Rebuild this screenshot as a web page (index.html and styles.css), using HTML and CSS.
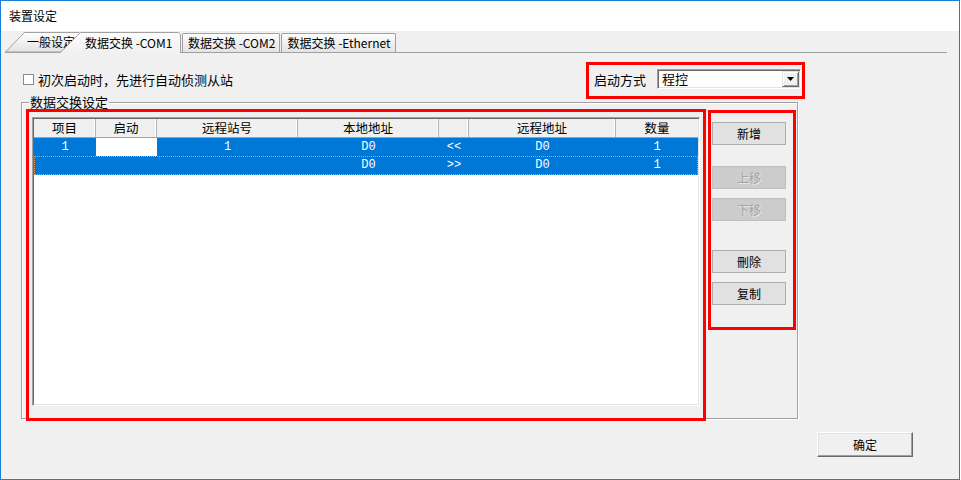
FILE: index.html
```html
<!DOCTYPE html>
<html lang="zh-CN">
<head>
<meta charset="utf-8">
<title>装置设定</title>
<link rel="stylesheet" href="styles.css">
</head>
<body>
<div class="window">
  <div class="titlebar">装置设定</div>
  <div class="tabs">
    <div class="tab tab-first">一般设定</div>
    <div class="tab tab-active">数据交换 -COM1</div>
    <div class="tab tab-plain">数据交换 -COM2</div>
    <div class="tab tab-plain">数据交换 -Ethernet</div>
  </div>
  <div class="content">
    <div class="toprow">
      <label class="check"><span class="box"></span><span>初次启动时，先进行自动侦测从站</span></label>
      <div class="redbox startbox">
        <span class="startlabel">启动方式</span>
        <div class="select">
          <span class="seltext">程控</span>
          <span class="selbtn"><svg width="7" height="4" viewBox="0 0 7 4"><polygon points="0,0 7,0 3.5,4" fill="#000"/></svg></span>
        </div>
      </div>
    </div>
    <div class="group">
      <div class="legend">数据交换设定</div>
      <div class="grouprow">
        <div class="redbox tablebox">
          <div class="listview">
            <div class="lv-row lv-head">
              <div class="c c1">项目</div>
              <div class="c c2">启动</div>
              <div class="c c3">远程站号</div>
              <div class="c c4">本地地址</div>
              <div class="c c5"></div>
              <div class="c c6">远程地址</div>
              <div class="c c7">数量</div>
            </div>
            <div class="lv-row sel">
              <div class="c c1">1</div>
              <div class="c c2 blank"></div>
              <div class="c c3">1</div>
              <div class="c c4">D0</div>
              <div class="c c5">&lt;&lt;</div>
              <div class="c c6">D0</div>
              <div class="c c7">1</div>
            </div>
            <div class="lv-row sel focus">
              <div class="c c1"></div>
              <div class="c c2"></div>
              <div class="c c3"></div>
              <div class="c c4">D0</div>
              <div class="c c5">&gt;&gt;</div>
              <div class="c c6">D0</div>
              <div class="c c7">1</div>
            </div>
          </div>
        </div>
        <div class="redbox btnbox">
          <button class="btn b-add">新增</button>
          <button class="btn b-up" disabled>上移</button>
          <button class="btn b-down" disabled>下移</button>
          <button class="btn b-del">刪除</button>
          <button class="btn b-copy">复制</button>
        </div>
      </div>
    </div>
    <div class="footer">
      <button class="okbtn">确定</button>
    </div>
  </div>
</div>
</body>
</html>
```

FILE: styles.css
```css
html, body {
  margin: 0;
  padding: 0;
  background: #ffffff;
}
body {
  font-family: "Noto Sans CJK SC", "Noto Sans", sans-serif;
  color: #000;
  width: 961px;
  height: 480px;
  overflow: hidden;
}
.window {
  width: 960px;
  height: 480px;
  box-sizing: border-box;
  border: 1px solid #1a7fd6;
  background: #f0f0f0;
}
.titlebar {
  height: 30px;
  background: #ffffff;
  padding-left: 8px;
  font-size: 12px;
  line-height: 29px;
}
.tabs {
  display: flex;
  align-items: flex-end;
  height: 21px;
  margin-left: 4px;
  width: 942px;
  border-bottom: 1px solid #a0a0a0;
}
.tab {
  font-size: 12px;
  white-space: nowrap;
  box-sizing: border-box;
}
.tab-first {
  width: 76px;
  height: 20px;
  line-height: 20px;
  padding-left: 22px;
  overflow: hidden;
  background: url("data:image/svg+xml;utf8,<svg xmlns='http://www.w3.org/2000/svg' width='76' height='20'><defs><linearGradient id='g' x1='0' y1='0' x2='0' y2='1'><stop offset='0' stop-color='%23ffffff'/><stop offset='1' stop-color='%23e2e2e2'/></linearGradient></defs><path d='M0.5 20 L19.5 0.5 H74 L76 2.5 V20 Z' fill='url(%23g)' stroke='%23a0a0a0'/></svg>") no-repeat;
}
.tab-active {
  position: relative;
  z-index: 1;
  width: 121px;
  height: 22px;
  margin-left: -21px;
  margin-bottom: -1px;
  padding-left: 25px;
  padding-top: 2px;
  line-height: 20px;
  background: url("data:image/svg+xml;utf8,<svg xmlns='http://www.w3.org/2000/svg' width='121' height='22'><defs><linearGradient id='g' x1='0' y1='0' x2='0' y2='1'><stop offset='0' stop-color='%23fdfdfd'/><stop offset='1' stop-color='%23f0f0f0'/></linearGradient></defs><path d='M0 22 L20.5 1.5 H118.5 L120.5 3.5 V22' fill='url(%23g)' stroke='%23a0a0a0'/></svg>") no-repeat;
}
.tab-plain {
  height: 19px;
  line-height: 18px;
  padding: 0 4px 0 5px;
  margin-left: 1px;
  border: 1px solid #a0a0a0;
  border-bottom: none;
  border-radius: 2px 2px 0 0;
  background: linear-gradient(#fdfdfd, #e3e3e3);
}
.content {
  padding-top: 9px;
}
.toprow {
  display: flex;
  align-items: center;
  justify-content: space-between;
  height: 37px;
  padding-left: 22px;
  padding-right: 154px;
}
.check {
  display: flex;
  align-items: center;
  gap: 4px;
  font-size: 13px;
  line-height: 16px;
  margin-top: -2px;
}
.box {
  width: 11px;
  height: 11px;
  box-sizing: border-box;
  border: 1px solid #8a8a8a;
  background: #fff;
}
.redbox {
  box-sizing: border-box;
  border: 3px solid #ff0000;
}
.startbox {
  width: 219px;
  height: 37px;
  display: flex;
  align-items: center;
  padding-left: 5px;
  padding-right: 1px;
  font-size: 13px;
}
.startlabel {
  line-height: 16px;
  margin-top: -2px;
}
.select {
  margin-left: auto;
  margin-top: -3px;
  width: 144px;
  height: 20px;
  box-sizing: border-box;
  border: 1px solid;
  border-color: #a0a0a0 #ffffff #ffffff #a0a0a0;
  box-shadow: inset 1px 1px #696969, inset -1px -1px #e3e3e3;
  background: #fff;
  display: flex;
  align-items: center;
}
.seltext {
  flex: 1;
  padding-left: 4px;
  font-size: 13px;
  line-height: 16px;
}
.selbtn {
  width: 17px;
  height: 16px;
  margin-right: 1px;
  box-sizing: border-box;
  background: #f0f0f0;
  border: 1px solid;
  border-color: #e3e3e3 #696969 #696969 #e3e3e3;
  box-shadow: inset 1px 1px #fff, inset -1px -1px #a0a0a0;
  display: flex;
  align-items: center;
  justify-content: center;
}
.group {
  margin-top: 3px;
  margin-left: 20px;
  width: 777px;
  height: 317px;
  box-sizing: border-box;
  border: 1px solid #a0a0a0;
  box-shadow: inset 1px 1px #fff, 1px 1px #fff;
}
.legend {
  width: fit-content;
  margin-top: -8px;
  margin-left: 7px;
  padding: 0 1px;
  background: #f0f0f0;
  font-size: 13px;
  line-height: 14px;
}
.grouprow {
  display: flex;
  align-items: flex-start;
  padding-left: 4px;
}
.tablebox {
  width: 680px;
  height: 312px;
  padding: 5px 0 0 3px;
}
.listview {
  width: 668px;
  height: 289px;
  box-sizing: border-box;
  background: #fff;
  border: 1px solid;
  border-color: #a0a0a0 #ffffff #ffffff #a0a0a0;
  box-shadow: inset 1px 1px #696969, inset -1px -1px #e3e3e3;
  padding: 1px;
}
.lv-row {
  display: flex;
  height: 18px;
}
.lv-head {
  height: 19px;
  box-sizing: border-box;
  border-bottom: 1px solid #a0a0a0;
  background: #f0f0f0;
  font-size: 12.5px;
  line-height: 18px;
}
.lv-head .c {
  border-right: 1px solid #b4b4b4;
  box-shadow: inset -1px 0 #fff;
}
.lv-head .c7 {
  border-right: none;
  box-shadow: none;
}
.c {
  text-align: center;
  box-sizing: border-box;
  white-space: nowrap;
}
.c1 { width: 62px; }
.c2 { width: 61px; }
.c3 { width: 141px; }
.c4 { width: 141px; }
.c5 { width: 30px; }
.c6 { width: 147px; }
.c7 { flex: 1; }
.sel {
  background: #0078d7;
  color: #fff;
  font-family: "Liberation Mono", "DejaVu Sans Mono", monospace;
  font-size: 12px;
  line-height: 18px;
}
.sel .blank {
  background: #fff;
}
.focus {
  height: 19px;
  line-height: 19px;
  outline: 1px dotted #e29a5a;
  outline-offset: -1px;
}
.btnbox {
  width: 88px;
  height: 220px;
  margin-left: 2px;
  margin-top: 1px;
  padding: 9px 0 0 1px;
  display: flex;
  flex-direction: column;
}
.btn {
  width: 74px;
  height: 23px;
  box-sizing: border-box;
  margin: 0;
  padding: 0;
  background: #e1e1e1;
  border: 1px solid #adadad;
  font-family: "Noto Sans CJK SC", sans-serif;
  font-size: 12px;
  line-height: 20px;
  color: #000;
}
.btn:disabled {
  background: #cccccc;
  border-color: #bfbfbf;
  color: #a3a3a3;
  text-shadow: 1px 1px #e6e6e6;
}
.b-up { margin-top: 21px; }
.b-down { margin-top: 9px; }
.b-del { margin-top: 29px; }
.b-copy { margin-top: 9px; }
.footer {
  display: flex;
  justify-content: flex-end;
  padding-right: 46px;
  margin-top: 13px;
}
.okbtn {
  width: 96px;
  height: 25px;
  box-sizing: border-box;
  margin: 0;
  padding: 0;
  background: #f0f0f0;
  border: 1px solid;
  border-color: #ffffff #696969 #696969 #ffffff;
  box-shadow: inset -1px -1px #a0a0a0, inset 1px 1px #e3e3e3;
  font-family: "Noto Sans CJK SC", sans-serif;
  font-size: 12px;
  line-height: 20px;
  color: #000;
}
```
